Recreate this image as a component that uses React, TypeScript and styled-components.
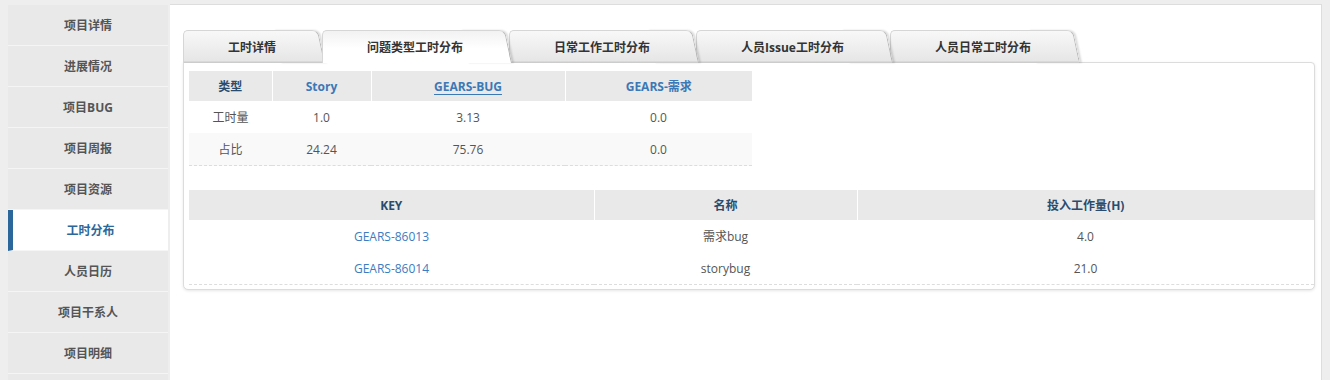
import React from 'react';
import styled, { createGlobalStyle } from 'styled-components';

const GlobalStyle = createGlobalStyle`
  html, body {
    margin: 0;
    padding: 0;
    background: #eeeeee;
    font-family: 'Open Sans', 'Noto Sans CJK SC', sans-serif;
    font-size: 12px;
  }
`;

const menuItems = ['项目详情', '进展情况', '项目BUG', '项目周报', '项目资源', '工时分布',
  '人员日历', '项目干系人', '项目明细', ''];

const tabs = ['工时详情', '问题类型工时分布', '日常工作工时分布', '人员Issue工时分布', '人员日常工时分布'];

const keyRows = [
  { key: 'GEARS-86013', name: '需求bug', hours: '4.0' },
  { key: 'GEARS-86014', name: 'storybug', hours: '21.0' },
];

const App: React.FC = () => {
  return (
    <Page>
      <GlobalStyle />
      <Sidebar>
        {menuItems.map((item, i) => (
          <MenuItem key={i} $active={item === '工时分布'}>{item}</MenuItem>
        ))}
      </Sidebar>
      <Panel>
        <TabBar>
          {tabs.map((tab, i) => (
            <Tab key={tab} $active={i === 1} $order={i}>{tab}</Tab>
          ))}
        </TabBar>
        <TabBody>
          <SummaryTable>
            <colgroup>
              <col style={{ width: 83 }} />
              <col style={{ width: 99 }} />
              <col style={{ width: 194 }} />
              <col style={{ width: 187 }} />
            </colgroup>
            <thead>
              <tr>
                <Th>类型</Th>
                <Th><HeadLink>Story</HeadLink></Th>
                <Th><HeadLink $underline>GEARS-BUG</HeadLink></Th>
                <Th><HeadLink>GEARS-需求</HeadLink></Th>
              </tr>
            </thead>
            <tbody>
              <Row>
                <Td>工时量</Td><Td>1.0</Td><Td>3.13</Td><Td>0.0</Td>
              </Row>
              <Row $striped>
                <Td>占比</Td><Td>24.24</Td><Td>75.76</Td><Td>0.0</Td>
              </Row>
            </tbody>
          </SummaryTable>

          <DetailTable>
            <colgroup>
              <col style={{ width: 405 }} />
              <col style={{ width: 263 }} />
              <col />
            </colgroup>
            <thead>
              <tr>
                <Th>KEY</Th>
                <Th>名称</Th>
                <Th>投入工作量(H)</Th>
              </tr>
            </thead>
            <tbody>
              {keyRows.map((r) => (
                <Row key={r.key}>
                  <Td><CellLink>{r.key}</CellLink></Td>
                  <Td>{r.name}</Td>
                  <Td>{r.hours}</Td>
                </Row>
              ))}
            </tbody>
          </DetailTable>
        </TabBody>
      </Panel>
    </Page>
  );
};

const Page = styled.div`
  display: flex;
  align-items: stretch;
  height: 380px;
  padding: 4px 8px 0 8px;
  box-sizing: border-box;
  overflow: hidden;
`;

const Sidebar = styled.nav`
  width: 160px;
  flex-shrink: 0;
  display: flex;
  flex-direction: column;
  padding-top: 1px;
`;

const MenuItem = styled.div<{ $active?: boolean }>`
  height: 40px;
  flex-shrink: 0;
  border-bottom: 1px solid #f5f5f5;
  border-left: ${(p) => (p.$active ? '5px solid #2b679b' : '0')};
  background: ${(p) => (p.$active ? '#ffffff' : '#e9e9e9')};
  color: ${(p) => (p.$active ? '#2b679b' : '#555555')};
  display: flex;
  align-items: center;
  justify-content: center;
  font-weight: bold;
  font-size: 12px;
`;

const Panel = styled.section`
  flex: 1;
  margin-left: 2px;
  background: #ffffff;
  border-top: 1px solid #dddddd;
  border-right: 1px solid #dddddd;
  padding: 25px 6px 0 13px;
`;

const TabBar = styled.div`
  display: flex;
  position: relative;
  z-index: 2;
  margin-bottom: -1px;
`;

const Tab = styled.div<{ $active?: boolean; $order: number }>`
  position: relative;
  z-index: ${(p) => (p.$active ? 10 : 5 - p.$order)};
  height: 33px;
  padding: 0 49px 0 45px;
  margin-right: -3px;
  display: flex;
  align-items: center;
  font-weight: bold;
  font-size: 12px;
  color: #333333;
  white-space: nowrap;

  &::before,
  &::after {
    content: '';
    position: absolute;
    top: 0;
    bottom: 0;
    z-index: -1;
    border-top: 1px solid #d6d6d6;
    background: ${(p) => (p.$active
    ? 'linear-gradient(#f2f2f2, #ffffff 55%)'
    : 'linear-gradient(#f8f8f8, #e6e6e6 calc(100% - 2px), #cccccc calc(100% - 1px))')};
  }

  &::before {
    left: 0;
    right: 24px;
    border-left: 1px solid #d6d6d6;
    border-radius: 5px 0 0 0;
  }

  &::after {
    right: 0;
    width: 44px;
    border-right: 1px solid #b4b4b4;
    border-radius: 0 6px 0 0;
    transform: skewX(12deg);
    transform-origin: bottom right;
    box-shadow: 2px 0 2px rgba(0, 0, 0, 0.14);
  }
`;

const TabBody = styled.div`
  position: relative;
  z-index: 1;
  border: 1px solid #dcdcdc;
  border-radius: 0 4px 5px 5px;
  box-shadow: 0 1px 3px rgba(0, 0, 0, 0.1);
  padding: 8px 0 4px 5px;
  background: #ffffff;
`;

const BaseTable = styled.table`
  border-collapse: collapse;
  table-layout: fixed;
  text-align: center;
  border-bottom: 1px dashed #dddddd;
`;

const SummaryTable = styled(BaseTable)`
  width: 563px;
  margin-bottom: 24px;
`;

const DetailTable = styled(BaseTable)`
  width: 100%;
`;

const Th = styled.th`
  height: 30px;
  padding: 0;
  background: #e9e9e9;
  border-left: 1px solid #ffffff;
  color: #2a4b6e;
  font-weight: bold;
  font-size: 12px;
  &:first-child { border-left: 0; }
`;

const Row = styled.tr<{ $striped?: boolean }>`
  background: ${(p) => (p.$striped ? '#f9f9f9' : '#ffffff')};
`;

const Td = styled.td`
  height: 32px;
  padding: 0;
  color: #555555;
  font-size: 12px;
`;

const HeadLink = styled.span<{ $underline?: boolean }>`
  color: #3b78b6;
  text-decoration: ${(p) => (p.$underline ? 'underline' : 'none')};
  text-underline-offset: 3px;
`;

const CellLink = styled.span`
  color: #3b7cc2;
`;

export default App;
